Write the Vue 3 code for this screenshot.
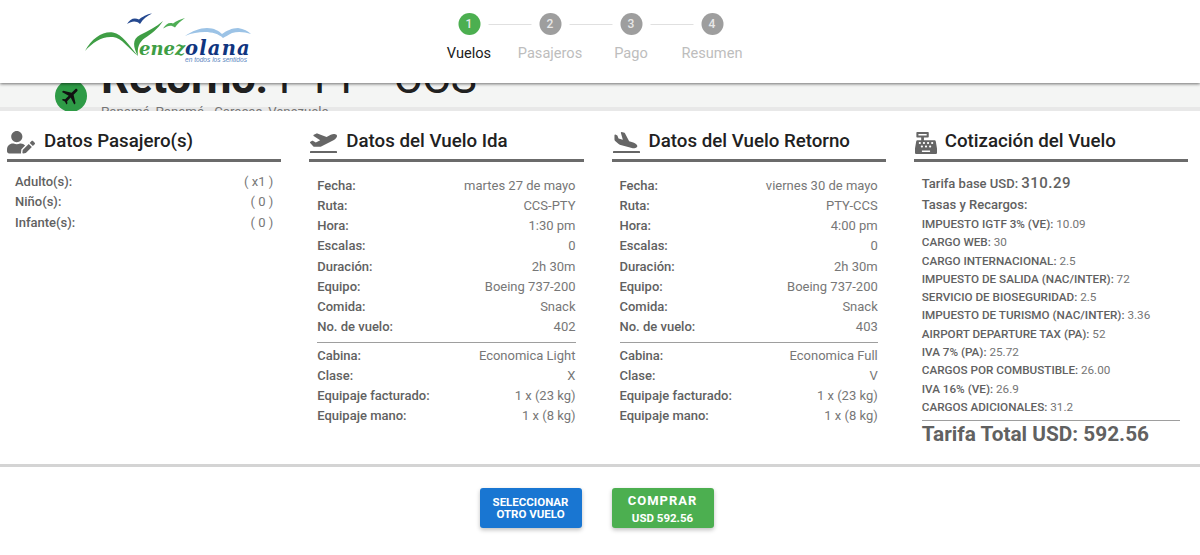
<script setup>
const steps = [
  { n: 1, label: 'Vuelos', active: true },
  { n: 2, label: 'Pasajeros' },
  { n: 3, label: 'Pago' },
  { n: 4, label: 'Resumen' }
]
const passengers = [
  ['Adulto(s):', '( x1 )'],
  ['Niño(s):', '( 0 )'],
  ['Infante(s):', '( 0 )']
]
const ida = {
  top: [
    ['Fecha:', 'martes 27 de mayo'], ['Ruta:', 'CCS-PTY'], ['Hora:', '1:30 pm'], ['Escalas:', '0'],
    ['Duración:', '2h 30m'], ['Equipo:', 'Boeing 737-200'], ['Comida:', 'Snack'], ['No. de vuelo:', '402']
  ],
  bottom: [
    ['Cabina:', 'Economica Light'], ['Clase:', 'X'], ['Equipaje facturado:', '1 x (23 kg)'], ['Equipaje mano:', '1 x (8 kg)']
  ]
}
const retorno = {
  top: [
    ['Fecha:', 'viernes 30 de mayo'], ['Ruta:', 'PTY-CCS'], ['Hora:', '4:00 pm'], ['Escalas:', '0'],
    ['Duración:', '2h 30m'], ['Equipo:', 'Boeing 737-200'], ['Comida:', 'Snack'], ['No. de vuelo:', '403']
  ],
  bottom: [
    ['Cabina:', 'Economica Full'], ['Clase:', 'V'], ['Equipaje facturado:', '1 x (23 kg)'], ['Equipaje mano:', '1 x (8 kg)']
  ]
}
const flights = [
  { title: 'Datos del Vuelo Ida', d: 'M624 448H16c-8.84 0-16 7.16-16 16v32c0 8.84 7.16 16 16 16h608c8.84 0 16-7.16 16-16v-32c0-8.84-7.16-16-16-16zM80.55 341.27c6.28 6.84 15.1 10.72 24.33 10.71l130.54-.18a65.62 65.62 0 0 0 29.64-7.12l290.96-147.65c26.74-13.57 50.71-32.94 67.02-58.31 18.31-28.48 20.3-49.09 13.07-63.65-7.21-14.57-24.74-25.27-58.25-27.45-29.85-1.94-59.54 5.92-86.28 19.48l-98.51 49.99-218.7-82.06a17.799 17.799 0 0 0-18-1.11L90.62 67.29c-10.67 5.41-13.25 19.65-5.17 28.53l156.22 98.1-103.21 52.38-72.35-36.47a17.804 17.804 0 0 0-16.07.02L9.91 230.22c-10.44 5.3-13.19 19.12-5.57 28.08l76.21 83z', data: ida },
  { title: 'Datos del Vuelo Retorno', d: 'M624 448H16c-8.84 0-16 7.16-16 16v32c0 8.84 7.16 16 16 16h608c8.84 0 16-7.16 16-16v-32c0-8.84-7.16-16-16-16zM44.81 205.66l88.74 80a62.607 62.607 0 0 0 25.47 13.93l287.6 78.35c26.48 7.21 54.56 8.72 81 1.36 29.67-8.27 43.44-21.21 47.25-35.71 3.83-14.5-1.73-32.71-23.37-54.96-19.28-19.82-44.35-32.79-70.83-40l-97.51-26.56L282.8 30.22c-1.51-5.81-5.95-10.35-11.6-11.91L206.05.58c-10.56-2.88-20.9 5.32-20.71 16.44l47.92 164.21-102.2-27.84-27.59-67.88c-1.93-4.89-6-8.57-10.95-9.92L55.4 60.83c-10.34-2.82-20.53 5.03-20.72 15.88l.23 101.78c.19 8.91 3.85 17.34 9.9 27.17z', data: retorno }
]
const fees = [
  ['IMPUESTO IGTF 3% (VE):', '10.09'], ['CARGO WEB:', '30'], ['CARGO INTERNACIONAL:', '2.5'],
  ['IMPUESTO DE SALIDA (NAC/INTER):', '72'], ['SERVICIO DE BIOSEGURIDAD:', '2.5'],
  ['IMPUESTO DE TURISMO (NAC/INTER):', '3.36'], ['AIRPORT DEPARTURE TAX (PA):', '52'],
  ['IVA 7% (PA):', '25.72'], ['CARGOS POR COMBUSTIBLE:', '26.00'], ['IVA 16% (VE):', '26.9'],
  ['CARGOS ADICIONALES:', '31.2']
]
</script>

<template>
  <div class="page">
    <header class="header">
      <svg class="logo" width="180" height="65" viewBox="0 0 180 65" role="img" aria-label="Venezolana">
        <path d="M5 46 C12 33 23 26 33 27.5 C42 29 49 40 58 51 C48 43 42 33 33 32 C22 31 13 37 5 46 Z" fill="#3f9e45"/>
        <path d="M58 51 C53 42 52 34 60 30 C68 26 76 22 83 16 C78 24 71 29 65 33 C59 37 57 43 58 51 Z" fill="#3f9e45"/>
        <path d="M47 19 C50 14 54 12 59 14.5 C62 12 67 9 72 8.5 C67 11 63 14 60 19 C56 15.5 52 16 47 19 Z" fill="#24488f"/>
        <path d="M83 23.5 C86 19 89 17 93 18.5 C96 16 101 14 105 13 C101 16 97 19 95 22.5 C91 19.5 88 20.5 83 23.5 Z" fill="#4fae55"/>
        <path d="M105 31 C112 26 120 23 127 23 C134 23 139 26 142 29 C146 26 152 23 158 23 C164 24 168 26 171 29 C165 27 158 26 152 28 C148 30 145 32 143 33 C139 29 132 27 125 27 C118 27 112 28 105 31 Z" fill="#9cc3e6"/>
        <text x="59" y="50" class="logo-green">enez</text>
        <text x="105" y="50" class="logo-blue">olana</text>
        <text x="105" y="56.5" class="logo-tag">en todos los sentidos</text>
      </svg>
      <ol class="steps">
        <li v-for="s in steps" :key="s.n" class="step" :class="{ active: s.active }">
          <span class="bubble">{{ s.n }}</span>
          <span class="step-label">{{ s.label }}</span>
        </li>
      </ol>
    </header>

    <div class="behind">
      <div class="behind-inner">
        <span class="plane-badge">
          <svg width="22" height="22" viewBox="0 0 24 24"><path transform="rotate(45 12 12)" fill="#111" d="M21 16v-2l-8-5V3.5c0-.83-.67-1.5-1.5-1.5S10 2.67 10 3.5V9l-8 5v2l8-2.5V19l-2 1.5V22l3.5-1 3.5 1v-1.5L13 19v-5.5l8 2.5z"/></svg>
        </span>
        <div>
          <div class="route-title"><b>Retorno:</b> PTY - CCS</div>
          <div class="route-sub">Panamá, Panamá - Caracas, Venezuela</div>
        </div>
      </div>
    </div>

    <main class="summary">
      <section class="col">
        <h2 class="col-title">
          <svg class="col-icon" width="28" height="22.4" viewBox="0 0 640 512">
            <path fill="#666" d="M224 256c70.7 0 128-57.3 128-128S294.7 0 224 0 96 57.3 96 128s57.3 128 128 128zm89.6 32h-16.7c-22.2 10.2-46.9 16-72.9 16s-50.6-5.8-72.9-16h-16.7C60.2 288 0 348.2 0 422.4V464c0 26.5 21.5 48 48 48h274.9c-2.4-6.8-3.4-14-2.6-21.3l6.8-60.9 1.2-11.1 7.9-7.9 77.3-77.3c-24.5-27.7-60-45.5-99.9-45.5zm45.3 145.3l-6.8 61c-1.1 10.2 7.5 18.8 17.6 17.6l60.9-6.8 137.9-137.9-71.7-71.7-137.9 137.8zM633 268.9L595.1 231c-9.3-9.3-24.5-9.3-33.8 0l-37.8 37.8-4.1 4.1 71.8 71.7 41.8-41.8c9.3-9.4 9.3-24.5 0-33.9z"/>
          </svg>
          Datos Pasajero(s)
        </h2>
        <div class="rows">
          <div v-for="r in passengers" :key="r[0]" class="row"><span class="k">{{ r[0] }}</span><span class="v">{{ r[1] }}</span></div>
        </div>
      </section>

      <section v-for="f in flights" :key="f.title" class="col">
        <h2 class="col-title">
          <svg class="col-icon plane" width="27" height="21.6" viewBox="0 0 640 512"><path fill="#666" :d="f.d"/></svg>
          {{ f.title }}
        </h2>
        <div class="rows flight-rows">
          <div v-for="r in f.data.top" :key="r[0]" class="row"><span class="k">{{ r[0] }}</span><span class="v">{{ r[1] }}</span></div>
          <hr class="sep" />
          <div v-for="r in f.data.bottom" :key="r[0]" class="row"><span class="k">{{ r[0] }}</span><span class="v">{{ r[1] }}</span></div>
        </div>
      </section>

      <section class="col">
        <h2 class="col-title register">
          <svg class="col-icon" width="22" height="22" viewBox="0 0 512 512">
            <path fill="#666" d="M511.1 378.8l-26.7-160c-2.6-15.4-15.9-26.7-31.6-26.7H208v-64h96c8.8 0 16-7.2 16-16V16c0-8.8-7.2-16-16-16H48c-8.8 0-16 7.2-16 16v96c0 8.8 7.2 16 16 16h96v64H59.1c-15.6 0-29 11.3-31.6 26.7L.8 378.7c-.5 2.9-.8 5.9-.8 8.9V480c0 17.7 14.3 32 32 32h448c17.7 0 32-14.3 32-32v-92.4c0-3-.3-6-.9-8.8zM280 248c0-8.8 7.2-16 16-16h16c8.8 0 16 7.2 16 16v16c0 8.8-7.2 16-16 16h-16c-8.8 0-16-7.2-16-16v-16zm-32 64h16c8.8 0 16 7.2 16 16v16c0 8.8-7.2 16-16 16h-16c-8.8 0-16-7.2-16-16v-16c0-8.8 7.2-16 16-16zm-32-80c8.8 0 16 7.2 16 16v16c0 8.8-7.2 16-16 16h-16c-8.8 0-16-7.2-16-16v-16c0-8.8 7.2-16 16-16h16zM80 80V48h192v32H80zm40 200h-16c-8.8 0-16-7.2-16-16v-16c0-8.8 7.2-16 16-16h16c8.8 0 16 7.2 16 16v16c0 8.8-7.2 16-16 16zm16 64v-16c0-8.8 7.2-16 16-16h16c8.8 0 16 7.2 16 16v16c0 8.8-7.2 16-16 16h-16c-8.8 0-16-7.2-16-16zm216 112c0 4.4-3.6 8-8 8H168c-4.4 0-8-3.6-8-8v-16c0-4.4 3.6-8 8-8h176c4.4 0 8 3.6 8 8v16zm24-112c0 8.8-7.2 16-16 16h-16c-8.8 0-16-7.2-16-16v-16c0-8.8 7.2-16 16-16h16c8.8 0 16 7.2 16 16v16zm48-80c0 8.8-7.2 16-16 16h-16c-8.8 0-16-7.2-16-16v-16c0-8.8 7.2-16 16-16h16c8.8 0 16 7.2 16 16v16z"/>
          </svg>
          Cotización del Vuelo
        </h2>
        <div class="quote">
          <div class="base">Tarifa base USD: <span class="base-n">310.29</span></div>
          <div class="fees-title">Tasas y Recargos:</div>
          <div v-for="fee in fees" :key="fee[0]" class="fee"><b>{{ fee[0] }}</b> {{ fee[1] }}</div>
          <div class="total">Tarifa Total USD: 592.56</div>
        </div>
      </section>
    </main>

    <footer class="actions">
      <button class="btn blue">SELECCIONAR<br />OTRO VUELO</button>
      <button class="btn green"><span class="buy">COMPRAR</span><span class="buy-sub">USD 592.56</span></button>
    </footer>
  </div>
</template>

<style>
html, body { margin: 0; background: #fff; overflow: hidden; }
</style>

<style scoped>
.page { width: 1200px; height: 555px; font-family: Roboto, "Liberation Sans", sans-serif; background: #fff; overflow: hidden; }
.header { height: 83px; position: relative; z-index: 2; background: #fff; box-shadow: 0 1px 3px rgba(0,0,0,.55); display: flex; justify-content: center; }
.logo { position: absolute; left: 80px; top: 5px; }
.logo-green { font: italic 700 18px "DejaVu Serif", serif; fill: #3f9e45; }
.logo-blue { font: italic 700 19.5px "DejaVu Serif", serif; fill: #10357f; letter-spacing: 1.2px; }
.logo-tag { font: italic 400 6.6px "Liberation Sans", sans-serif; fill: #5b86c0; }
.steps { list-style: none; margin: 0; padding: 13px 0 0 0; display: flex; transform: translateX(-9.5px); }
.step { width: 81px; display: flex; flex-direction: column; align-items: center; position: relative; }
.step + .step::before { content: ""; position: absolute; top: 11px; left: -21px; width: 43px; height: 1px; background: #e0e0e0; }
.bubble { width: 22px; height: 22px; border-radius: 50%; background: #9e9e9e; color: #e8e8e8; font-size: 12px; font-weight: 500; display: flex; align-items: center; justify-content: center; }
.step.active .bubble { background: #4caf50; }
.step-label { margin-top: 9px; font-size: 14.6px; line-height: 18px; color: #bdbdbd; white-space: nowrap; }
.step.active .step-label { color: #212121; }

.behind { height: 28px; overflow: hidden; background: linear-gradient(#f4f5f4 0 24px, #e8e8e8 24px); }
.behind-inner { display: flex; gap: 14px; padding-left: 55px; margin-top: -28px; }
.plane-badge { width: 32px; height: 32px; border-radius: 50%; background: #2e9b46; display: flex; align-items: center; justify-content: center; margin-top: 25px; flex: none; }
.route-title { font-size: 44px; line-height: 48px; color: #212121; white-space: nowrap; margin-top: -1px; }
.route-title b { font-weight: 700; letter-spacing: -.3px; }
.route-sub { font-size: 13.2px; line-height: 16px; color: #757575; margin-top: 2px; white-space: nowrap; }

.summary { display: grid; grid-template-columns: repeat(4, 1fr); column-gap: 28px; padding: 16px 12px 0 7px; height: 337px; box-sizing: content-box; border-bottom: 3px solid #d4d4d4; }
.col { min-width: 0; }
.col-title { margin: 0; height: 28px; padding-bottom: 4px; box-sizing: content-box; border-bottom: 3px solid #6b6b6b; display: flex; align-items: center; gap: 9px; font-size: 18.72px; font-weight: 500; color: #212121; white-space: nowrap; }
.col-icon { flex: none; margin-top: 3px; }
.plane { margin-left: 1px; }
.register { gap: 8px; }
.register .col-icon { margin-left: 1px; }
.rows { padding: 10px 8px 0 8px; }
.flight-rows { padding-top: 13.7px; }
.row { display: flex; justify-content: space-between; font-size: 13px; line-height: 20.25px; color: #777; }
.k { font-weight: 500; color: #616161; }
.sep { border: 0; border-top: 1px solid #9e9e9e; margin: 4px 0 3px; }
.quote { padding: 11px 8px 0 8px; color: #616161; font-weight: 500; }
.base { font-size: 13px; line-height: 20px; }
.base-n { font-size: 15px; letter-spacing: .5px; }
.fees-title { font-size: 13px; line-height: 21px; }
.fee { font-size: 11.7px; line-height: 18.3px; font-weight: 400; color: #757575; white-space: nowrap; }
.fee b { font-weight: 500; color: #616161; }
.total { margin-top: 4px; padding-top: 1px; border-top: 1px solid #9e9e9e; font-size: 20.8px; line-height: 24px; font-weight: 700; white-space: nowrap; }

.actions { display: flex; justify-content: center; gap: 30px; padding-top: 21px; padding-right: 7px; }
.btn { width: 102px; height: 40px; border: 0; border-radius: 3px; padding: 0; color: #fff; font-family: inherit; font-weight: 700; box-shadow: 0 2px 4px rgba(0,0,0,.25); display: flex; flex-direction: column; align-items: center; justify-content: center; }
.blue { background: #1976d2; font-size: 11.5px; line-height: 12px; display: block; }
.green { background: #4caf50; padding-top: 2px; }
.buy { font-size: 13px; letter-spacing: 1px; line-height: 17px; }
.buy-sub { font-size: 11.5px; line-height: 15px; margin-top: 2px; }
</style>
